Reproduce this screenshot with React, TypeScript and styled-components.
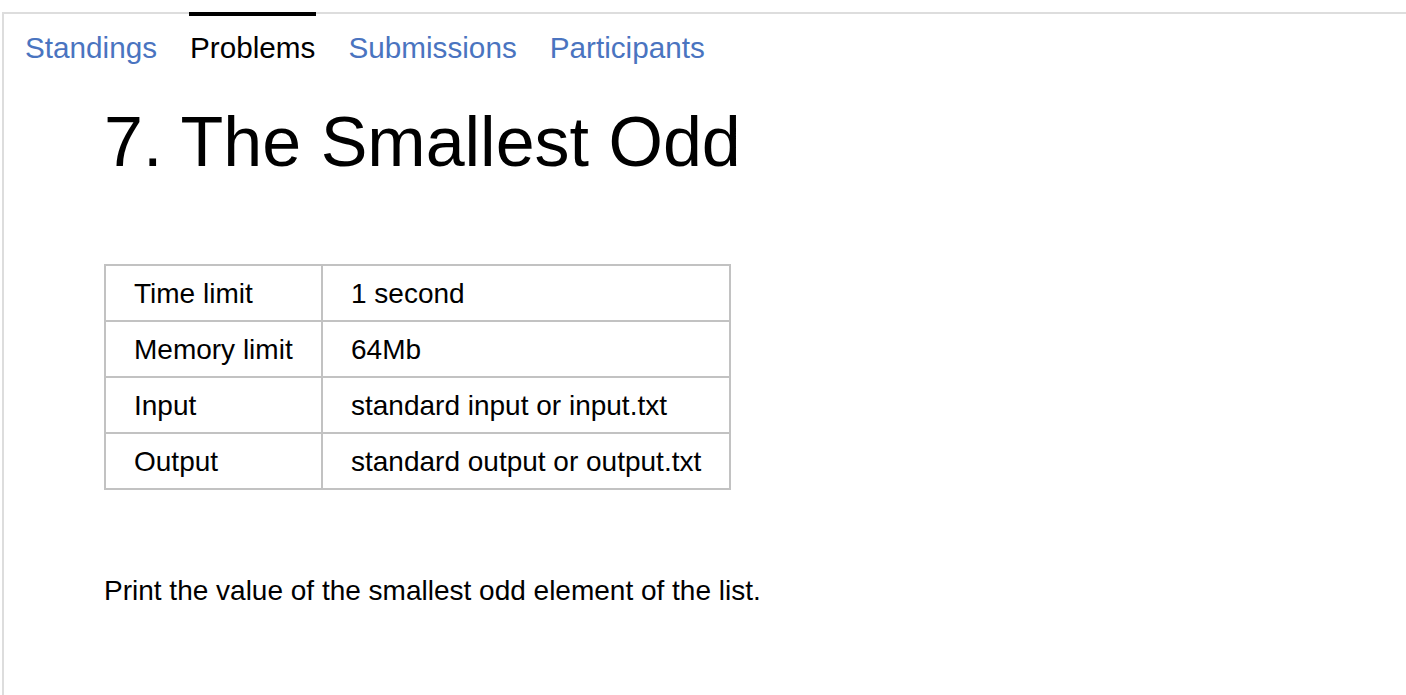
import styled, { createGlobalStyle } from 'styled-components';

const GlobalStyle = createGlobalStyle`
  html, body {
    margin: 0;
    padding: 0;
    background: #fff;
  }
  body {
    font-family: "Liberation Sans", Arial, Helvetica, sans-serif;
    color: #000;
  }
`;

const Page = styled.div`
  margin: 12px 0 0 2px;
  border-top: 2px solid #dddddd;
  border-left: 2px solid #dddddd;
  min-height: calc(100vh - 14px);
  width: 1402px;
`;

const Tabs = styled.nav`
  display: flex;
  gap: 31px;
  margin-top: -2px;
  padding-left: 20px;
`;

const Tab = styled.a<{ $active?: boolean }>`
  display: block;
  font-size: 29.7px;
  line-height: 34px;
  padding: 15px 1px 0;
  border-top: 4px solid ${p => (p.$active ? '#000' : 'transparent')};
  color: ${p => (p.$active ? '#000' : '#4a74c0')};
  text-decoration: none;
  cursor: pointer;
`;

const Content = styled.main`
  padding-left: 100px;
`;

const Title = styled.h1`
  margin: 37px 0 0;
  font-size: 70px;
  font-weight: normal;
  line-height: 1.15;
`;

const Limits = styled.table`
  margin-top: 81px;
  border-collapse: collapse;
  table-layout: fixed;
  width: 627px;
  font-size: 28px;
  line-height: 32px;

  td {
    border: 2px solid #c2c2c2;
    padding: 12px 28px 10px;
    white-space: nowrap;
  }

  td:first-child {
    width: 159px;
  }
`;

const Statement = styled.p`
  margin: 85px 0 0;
  font-size: 28px;
  line-height: 32px;
`;

const tabs = ['Standings', 'Problems', 'Submissions', 'Participants'];

const limits: [string, string][] = [
  ['Time limit', '1 second'],
  ['Memory limit', '64Mb'],
  ['Input', 'standard input or input.txt'],
  ['Output', 'standard output or output.txt'],
];

const App = (): JSX.Element => {
  return <>
    <GlobalStyle />
    <Page>
      <Tabs>
        {tabs.map(t => <Tab key={t} $active={t === 'Problems'}>{t}</Tab>)}
      </Tabs>
      <Content>
        <Title>7. The Smallest Odd</Title>
        <Limits>
          <tbody>
            {limits.map(([name, value]) => <tr key={name}>
              <td>{name}</td>
              <td>{value}</td>
            </tr>)}
          </tbody>
        </Limits>
        <Statement>Print the value of the smallest odd element of the list.</Statement>
      </Content>
    </Page>
  </>;
};

export default App;
